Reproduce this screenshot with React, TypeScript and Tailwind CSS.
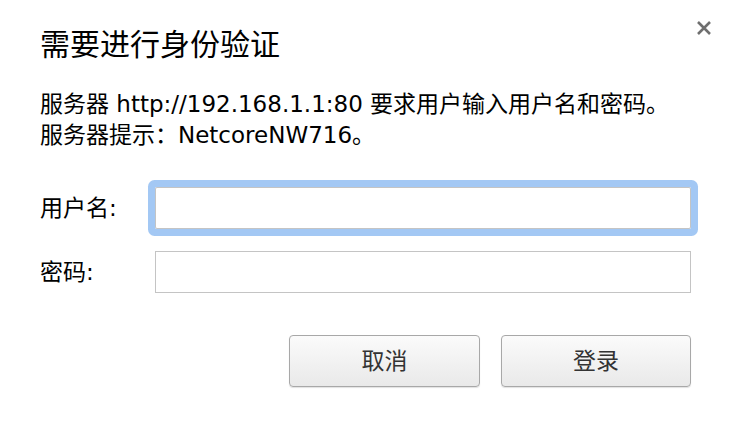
import { useState } from 'react';

const font = { fontFamily: '"DejaVu Sans", "Noto Sans CJK SC", sans-serif' };

export default function App() {
  const [form, setForm] = useState({ username: '', password: '' });

  const handleChange = (e: React.ChangeEvent<HTMLInputElement>) => {
    setForm({ ...form, [e.target.name]: e.target.value });
  };

  return (
    <div className="relative w-[732px] h-[430px] bg-white text-black overflow-hidden" style={font}>
      {/* Close button */}
      <button type="button" className="absolute left-[696px] top-[20px] w-[16px] h-[16px]" aria-label="关闭">
        <svg width="16" height="16" viewBox="0 0 16 16">
          <path d="M2 2 L14 14 M14 2 L2 14" stroke="#6f6f6f" strokeWidth="2.6" strokeLinecap="butt" />
        </svg>
      </button>

      <div className="pl-[40px] pr-[41px] pt-[27px]">
        <h1 className="text-[30px] leading-[36px] font-normal">需要进行身份验证</h1>

        <div className="mt-[26px] text-[23px] leading-[31px]">
          <p>服务器 http://192.168.1.1:80 要求用户输入用户名和密码。</p>
          <p>服务器提示：NetcoreNW716。</p>
        </div>

        <form className="mt-[36px]" onSubmit={(e) => e.preventDefault()}>
          <div className="flex items-center">
            <label htmlFor="username" className="w-[115px] text-[23px]">
              用户名:
            </label>
            <input
              id="username"
              name="username"
              value={form.username}
              onChange={handleChange}
              className="w-[536px] h-[42px] border border-[#c4c4c4] rounded-[2px] px-2 text-[20px] outline-none shadow-[0_0_0_7px_#a3c8f4]"
            />
          </div>
          <div className="flex items-center mt-[22px]">
            <label htmlFor="password" className="w-[115px] text-[23px]">
              密码:
            </label>
            <input
              id="password"
              name="password"
              type="password"
              value={form.password}
              onChange={handleChange}
              className="w-[536px] h-[42px] border border-[#c4c4c4] px-2 text-[20px] outline-none"
            />
          </div>

          <div className="flex justify-end gap-[21px] mt-[42px]">
            <button
              type="button"
              className="w-[191px] h-[52px] rounded-[4px] border border-[#a8a8a8] bg-gradient-to-b from-[#fbfbfb] to-[#e9e9e9] text-[23px] text-[#333] shadow-[0_1px_1px_rgba(0,0,0,0.12)]"
            >
              取消
            </button>
            <button
              type="submit"
              className="w-[190px] h-[52px] rounded-[4px] border border-[#a8a8a8] bg-gradient-to-b from-[#fbfbfb] to-[#e9e9e9] text-[23px] text-[#333] shadow-[0_1px_1px_rgba(0,0,0,0.12)]"
            >
              登录
            </button>
          </div>
        </form>
      </div>
    </div>
  );
}
